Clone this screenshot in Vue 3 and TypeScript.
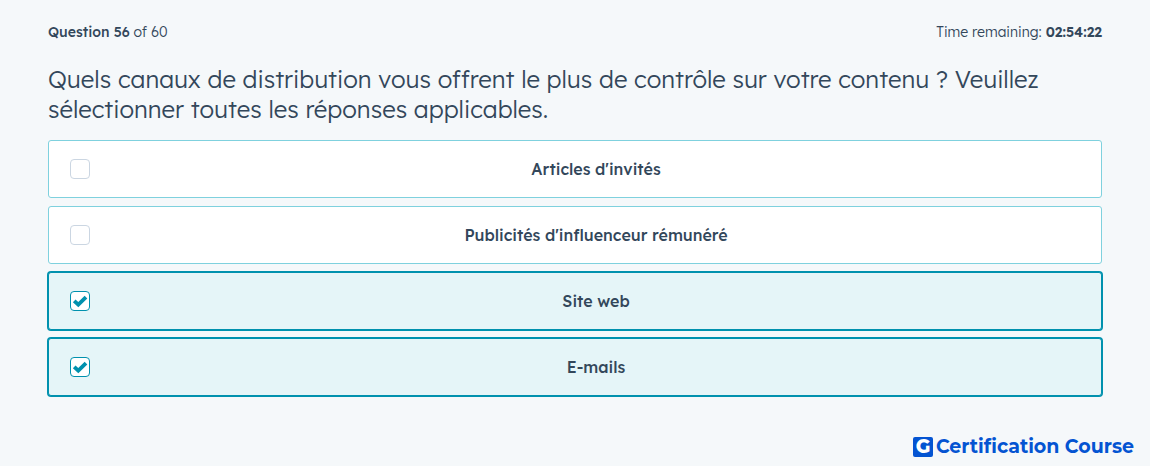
<script setup lang="ts">
import { ref } from 'vue'

interface Answer {
  id: string
  label: string
}

const answers: Answer[] = [
  { id: 'guest-posts', label: "Articles d'invités" },
  { id: 'paid-influencer', label: "Publicités d'influenceur rémunéré" },
  { id: 'website', label: 'Site web' },
  { id: 'emails', label: 'E-mails' },
]

const selected = ref<string[]>(['website', 'emails'])
</script>

<template>
  <main class="quiz">
    <header class="status">
      <span><strong class="count">Question 56</strong> of 60</span>
      <span>Time remaining: <strong>02:54:22</strong></span>
    </header>

    <h1 id="question" class="question">
      Quels canaux de distribution vous offrent le plus de contrôle sur votre contenu ? Veuillez
      sélectionner toutes les réponses applicables.
    </h1>

    <div class="answers" role="group" aria-labelledby="question">
      <label
        v-for="answer in answers"
        :key="answer.id"
        class="answer"
        :class="{ chosen: selected.includes(answer.id) }"
        :for="answer.id"
      >
        <span class="tick">
          <input :id="answer.id" v-model="selected" type="checkbox" :value="answer.id" />
          <svg v-if="selected.includes(answer.id)" viewBox="0 0 20 20" aria-hidden="true">
            <path d="M4.2 9.8 L8.3 13.7 L16 6.2" />
          </svg>
        </span>
        <span class="text">{{ answer.label }}</span>
      </label>
    </div>

    <footer class="brand">
      <span class="mark">G</span>
      <span>Certification Course</span>
    </footer>
  </main>
</template>

<style>
body {
  margin: 0;
  background: #f5f8fa;
}
</style>

<style scoped>
.quiz {
  box-sizing: border-box;
  min-height: 100vh;
  padding: 22px 48px 8px;
  display: flex;
  flex-direction: column;
  background: #f5f8fa;
  color: #33475b;
  font-family: 'Lexend Deca', Lexend, Inter, sans-serif;
}

.status {
  display: flex;
  justify-content: space-between;
  font-size: 14px;
  font-weight: 300;
  line-height: 20px;
}

.status strong {
  font-weight: 600;
}

.status .count {
  font-weight: 500;
}

.question {
  margin: 22px 0 16px;
  font-size: 24px;
  font-weight: 300;
  line-height: 30px;
}

.answers {
  display: flex;
  flex-direction: column;
  gap: 8px;
}

.answer {
  box-sizing: border-box;
  min-height: 58px;
  padding-left: 21px;
  display: flex;
  align-items: center;
  gap: 1px;
  border: 1px solid #7fd1de;
  border-radius: 3px;
  background: #fff;
  cursor: pointer;
}

.answer.chosen {
  border-color: #0091ae;
  background: #e5f5f8;
  box-shadow: 0 0 0 1px #0091ae;
}

.tick {
  display: grid;
  width: 20px;
  height: 20px;
}

.tick input,
.tick svg {
  grid-area: 1 / 1;
  width: 20px;
  height: 20px;
}

.tick input {
  box-sizing: border-box;
  margin: 0;
  appearance: none;
  border: 1px solid #cbd6e2;
  border-radius: 4px;
  background: #fff;
}

.chosen .tick input {
  border-color: #0091ae;
}

.tick svg {
  fill: none;
  stroke: #0091ae;
  stroke-width: 3.8;
  pointer-events: none;
}

.text {
  flex: 1;
  text-align: center;
  font-size: 16px;
  font-weight: 500;
  line-height: 24px;
}

.brand {
  margin: auto -32px 0 0;
  display: flex;
  justify-content: flex-end;
  align-items: center;
  gap: 3px;
  color: #0454d2;
  font-family: Montserrat, Inter, sans-serif;
  font-size: 19px;
  font-weight: 700;
  line-height: 22px;
}

.mark {
  width: 20px;
  height: 20px;
  border-radius: 2px;
  background: #0454d2;
  color: #fff;
  font-weight: 800;
  line-height: 20px;
  text-align: center;
}
</style>
